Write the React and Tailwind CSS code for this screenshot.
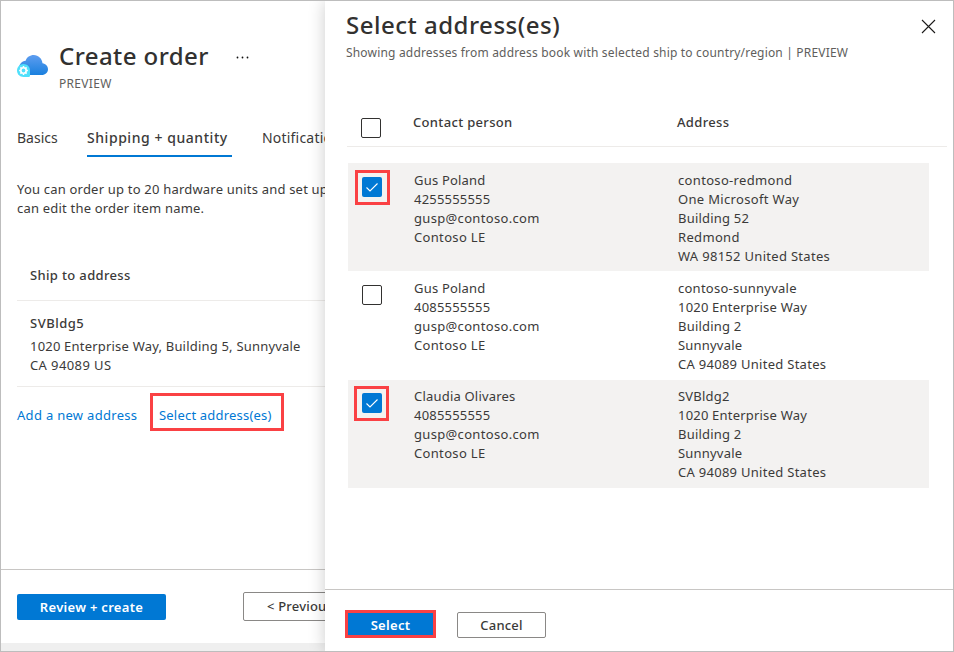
import React from "react";

const contacts = [
  {
    checked: true,
    person: ["Gus Poland", "4255555555", "gusp@contoso.com", "Contoso LE"],
    address: ["contoso-redmond", "One Microsoft Way", "Building 52", "Redmond", "WA 98152 United States"],
    row: "h-[108px] bg-[#f3f2f1] pt-2",
    outline: "-left-[7px] -top-[7px]",
  },
  {
    checked: false,
    person: ["Gus Poland", "4085555555", "gusp@contoso.com", "Contoso LE"],
    address: ["contoso-sunnyvale", "1020 Enterprise Way", "Building 2", "Sunnyvale", "CA 94089 United States"],
    row: "h-[109px] pt-2",
  },
  {
    checked: true,
    person: ["Claudia Olivares", "4085555555", "gusp@contoso.com", "Contoso LE"],
    address: ["SVBldg2", "1020 Enterprise Way", "Building 2", "Sunnyvale", "CA 94089 United States"],
    row: "h-[108px] bg-[#f3f2f1] pt-[7px]",
    outline: "-left-2 -top-[7px]",
  },
];

const tracking = {
  "gusp@contoso.com": "tracking-[0.33px]",
  "Contoso LE": "tracking-[0.33px]",
  "contoso-redmond": "tracking-[0.33px]",
  "One Microsoft Way": "tracking-[0.33px]",
  "contoso-sunnyvale": "tracking-[0.25px]",
  "Redmond": "tracking-[0.33px]",
  "WA 98152 United States": "tracking-[0.3px]",
  "CA 94089 United States": "tracking-[0.28px]",
};

function CloudIcon() {
  return (
    <svg className="block h-[24px] w-[32px]" viewBox="0 0 32 24" fill="none">
      <defs>
        <linearGradient id="cloud" x1="16" y1="1" x2="16" y2="21" gradientUnits="userSpaceOnUse">
          <stop stopColor="#5e9df0" />
          <stop offset="1" stopColor="#1a80de" />
        </linearGradient>
      </defs>
      <path d="M9 21H24.6C28.4 21 31 18.4 31 15.2C31 12 28.6 9.700 25.500 9.300C25 4.600 21.400 1 16.800 1C12.900 1 9.800 3.200 8.600 6.700C4.700 7.200 2 10.200 2 14C2 18 5 21 9 21Z" fill="url(#cloud)" />
      <path d="M6.500 10C10 10 13 12.800 13 16.300V21.800C13 22.500 12.600 23 11.900 23H6.500C3 23 0 20.100 0 16.500C0 12.900 3 10 6.500 10Z" fill="#50e0fb" />
      <circle cx="6.500" cy="16.500" r="2.700" stroke="#fff" strokeWidth="1.600" />
      <path d="M6.500 12.100V13.500M6.500 19.500V20.900M2.100 16.500H3.500M9.500 16.500H10.900M3.400 13.400L4.500 14.500M8.500 18.500L9.600 19.600M9.600 13.400L8.500 14.500M4.500 18.500L3.400 19.600" stroke="#fff" strokeWidth="1.500" />
    </svg>
  );
}

function Checkbox({ checked, outline }) {
  if (!checked) {
    return <div className="h-5 w-5 rounded-[2px] border border-[#323130] bg-white" />;
  }
  return (
    <div className="relative h-5 w-5 rounded-[2px] bg-[#0078d4]">
      <svg className="block h-5 w-5" viewBox="0 0 20 20" fill="none">
        <path d="M4.500 10.500L8 14L15.500 6.500" stroke="#fff" strokeWidth="1.100" />
      </svg>
      <div className={"absolute h-[35px] w-[35px] border-[3px] border-[#fa4144] " + outline} />
    </div>
  );
}

function OrderPage() {
  return (
    <div className="flex h-full w-[324px] shrink-0 flex-col overflow-hidden">
      <header className="flex h-[92px] pl-4 pt-[40px]">
        <div className="w-[42px] pt-[13px]">
          <CloudIcon />
        </div>
        <div>
          <h1 className="h-[32px] w-[149px] whitespace-nowrap text-[24px] leading-[30px] font-medium tracking-[0.42px] text-[#323130]">Create order</h1>
          <div className="pt-px text-[12px] leading-[20px] tracking-[0.3px] text-[#605e5c]">PREVIEW</div>
        </div>
        <svg className="ml-[28px] mt-[15px] block h-[4px] w-[14px]" viewBox="0 0 14 4" fill="#111">
          <circle cx="1.500" cy="1.500" r="0.900" />
          <circle cx="6.500" cy="1.500" r="0.900" />
          <circle cx="11.500" cy="1.500" r="0.900" />
        </svg>
      </header>
      <nav className="mt-[32px] flex h-[32px] pl-4 text-[14px] leading-[26px] whitespace-nowrap">
        <div className="w-[70px] shrink-0 tracking-normal">Basics</div>
        <div className="w-[145px] shrink-0 border-b-2 border-[#0078d4] font-medium tracking-[0.55px]">Shipping + quantity</div>
        <div className="ml-[30px] shrink-0">Notifications</div>
      </nav>
      <p className="mt-[23px] whitespace-nowrap pl-4 leading-[19px]">
        You can order up to 20 hardware units and set up
        <br />
        can edit the order item name.
      </p>
      <section className="ml-4 mt-[31px]">
        <div className="h-[52px] border-b border-[#edebe9] pl-[13px] pt-[17px] leading-[19px] font-medium tracking-[0.35px]">Ship to address</div>
        <div className="h-[86px] border-b border-[#edebe9] pl-[13px] pt-[13px] leading-[19px]">
          <div className="mb-1 font-medium tracking-[0.5px]">SVBldg5</div>
          <div className="whitespace-nowrap">1020 Enterprise Way, Building 5, Sunnyvale</div>
          <div className="tracking-[0.4px]">CA 94089 US</div>
        </div>
      </section>
      <div className="ml-4 mt-1.5 flex h-[38px] items-center text-[#0078d4]">
        <a className="w-[133px] whitespace-nowrap pt-2 tracking-[0.3px]">Add a new address</a>
        <a className="flex h-[38px] w-[134px] items-center border-[3px] border-[#fa4144] pl-1.5 pt-2 whitespace-nowrap">Select address(es)</a>
      </div>
      <footer className="mt-auto h-[82px] shrink-0 border-t border-[#c8c6c4]">
        <div className="flex h-[73px] items-start pl-4 whitespace-nowrap">
          <button className="mt-6 h-[26px] w-[149px] shrink-0 rounded-[2px] bg-[#0078d4] pt-px font-semibold tracking-[0.3px] text-white">Review + create</button>
          <button className="ml-[77px] mt-[22px] h-[29px] w-[120px] shrink-0 rounded-[2px] border border-[#8a8886] pl-[23px] pt-px text-left font-medium">&lt; Previous</button>
        </div>
        <div className="h-2 bg-[#efefef]" />
      </footer>
    </div>
  );
}

function AddressPanel() {
  return (
    <aside className="relative flex h-full flex-1 flex-col bg-white shadow-[0_0_16px_rgba(0,0,0,0.2)]">
      <header className="flex h-[92px] justify-between pl-[21px] pr-[17px]">
        <div className="whitespace-nowrap pt-[8px]">
          <h2 className="h-[35px] text-[24px] leading-[32px] font-medium tracking-[0.5px] text-[#323130]">Select address(es)</h2>
          <p className="text-[12px] leading-[18px] tracking-[0.18px] text-[#605e5c]">Showing addresses from address book with selected ship to country/region | PREVIEW</p>
        </div>
        <svg className="mt-[18px] block h-[15px] w-[15px]" viewBox="0 0 15 15">
          <path d="M1 1L14 14M14 1L1 14" stroke="#1b1a19" strokeWidth="1.100" />
        </svg>
      </header>
      <div className="ml-[22px] mr-[6px] flex h-[54px] border-b border-[#edebe9] pl-[14px] font-medium">
        <div className="w-[52px] pt-[25px]">
          <Checkbox />
        </div>
        <div className="w-[264px] pt-5 leading-[19px] tracking-[0.33px]">Contact person</div>
        <div className="pt-5 leading-[19px] tracking-[0.33px]">Address</div>
      </div>
      <div className="ml-[23px] mr-[24px] mt-4 whitespace-nowrap leading-[19px]">
        {contacts.map((c, i) => (
          <div key={i} className={"flex pl-[14px] " + c.row}>
            <div className="w-[52px] pt-1.5">
              <Checkbox checked={c.checked} outline={c.outline} />
            </div>
            <div className="w-[264px]">
              {c.person.map((line) => (
                <div key={line} className={tracking[line]}>{line}</div>
              ))}
            </div>
            <div>
              {c.address.map((line) => (
                <div key={line} className={tracking[line]}>{line}</div>
              ))}
            </div>
          </div>
        ))}
      </div>
      <footer className="mt-auto flex h-[62px] items-start border-t border-[#c8c6c4] pl-5">
        <button className="mt-5 h-7 w-[91px] border-[3px] border-[#fa4144] bg-[#0078d4] pt-[2px] font-semibold leading-[20px] tracking-[0.3px] text-white">Select</button>
        <button className="ml-[21px] mt-[22px] h-[26px] w-[89px] rounded-[2px] border border-[#8a8886] pt-px font-medium">Cancel</button>
      </footer>
    </aside>
  );
}

export default function App() {
  return (
    <div className="flex h-[652px] w-[954px] overflow-hidden border border-[#bdbdbd] bg-white font-['Noto_Sans','Open_Sans',sans-serif] text-[13px] tracking-[0.2px] text-[#3b3a39]">
      <OrderPage />
      <AddressPanel />
    </div>
  );
}
